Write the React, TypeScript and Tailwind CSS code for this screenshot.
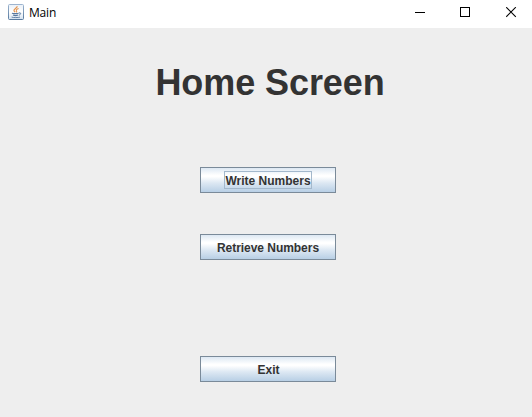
import { ReactNode } from "react";

function JavaIcon() {
  return (
    <svg width="16" height="16" viewBox="0 0 16 16" fill="none" aria-hidden="true">
      <defs>
        <linearGradient id="tile" x1="0" y1="0" x2="0" y2="1">
          <stop offset="0" stopColor="#e9f0f8" />
          <stop offset="0.5" stopColor="#ffffff" />
          <stop offset="1" stopColor="#d3e1ef" />
        </linearGradient>
        <linearGradient id="edge" x1="0" y1="0" x2="0" y2="1">
          <stop offset="0" stopColor="#9db4cf" />
          <stop offset="1" stopColor="#587a9f" />
        </linearGradient>
      </defs>
      <rect x="0.5" y="0.5" width="15" height="15" rx="1" fill="url(#tile)" stroke="url(#edge)" />
      <path d="M9.2 2.2C9.4 4 5.2 5 6 6.7C6.3 7.4 6.9 7.8 7.2 8.2" stroke="#e5954f" strokeWidth="1.3" />
      <path d="M10.6 4.4C9 5 7.9 5.7 8.5 6.7C8.9 7.3 8.8 7.8 8.3 8.3" stroke="#e5954f" strokeWidth="1.1" />
      <path d="M4 9.2C5 9.8 9.2 9.7 10.6 9.2M5 11.1C6.3 11.6 8.7 11.6 10 11.1" stroke="#5778a0" strokeWidth="1.1" />
      <path d="M10.8 9C13.6 8.2 13 10.7 10.8 11.2" stroke="#5778a0" strokeWidth="1" />
      <path d="M3.6 13.1C5 13.7 10.4 13.7 12 13.1" stroke="#5778a0" strokeWidth="0.9" />
    </svg>
  );
}

function TitleBar() {
  return (
    <header className="flex h-7 items-start bg-white pl-2">
      <div className="pt-1">
        <JavaIcon />
      </div>
      <span className="ml-[5px] mt-[5px] font-['Open_Sans','Noto_Sans',sans-serif] text-[12px] leading-4 tracking-[-0.2px] text-black">
        Main
      </span>
      <div className="ml-auto mr-[15px] mt-[7px] flex gap-[35px] text-black">
        <svg width="11" height="11" viewBox="0 0 11 11" shapeRendering="crispEdges">
          <path d="M1 5.5h10" stroke="currentColor" />
        </svg>
        <svg width="11" height="11" viewBox="0 0 11 11" fill="none" shapeRendering="crispEdges">
          <rect x="0.5" y="0.5" width="9" height="9" stroke="currentColor" />
        </svg>
        <svg width="11" height="11" viewBox="0 0 11 11">
          <path d="M0.2 0.2l9.6 9.6M9.8 0.2l-9.6 9.6" stroke="currentColor" strokeWidth="1.1" />
        </svg>
      </div>
    </header>
  );
}

function SwingButton({ children, focused = false }: { children: ReactNode; focused?: boolean }) {
  return (
    <button
      type="button"
      className="flex h-[26px] w-[136px] items-center justify-center border border-[#7a8a99] bg-[linear-gradient(to_bottom,#dde8f3_0%,#ffffff_30%,#ffffff_36%,#dde8f3_62%,#b8cfe5_100%)] text-[12px] font-bold text-[#333333]"
    >
      <span
        className={
          focused
            ? "flex h-[18px] w-[88px] justify-center border border-[#a3b8cc] pt-0.5 leading-[15px]"
            : "block pt-0.5 leading-4 tracking-[-0.04px]"
        }
      >
        {children}
      </span>
    </button>
  );
}

export default function App() {
  return (
    <div className="flex h-[417px] w-[532px] flex-col overflow-hidden bg-[#eeeeee] font-['Liberation_Sans',Arial,sans-serif]">
      <TitleBar />
      <main className="flex flex-col items-center pt-[34px]">
        <h1 className="ml-2 whitespace-nowrap text-[36px] font-bold leading-[42px] tracking-[-0.08px] text-[#333333]">
          Home Screen
        </h1>
        <div className="mt-[63px] flex flex-col pl-1">
          <SwingButton focused>Write Numbers</SwingButton>
          <div className="mt-[41px]">
            <SwingButton>Retrieve Numbers</SwingButton>
          </div>
          <div className="mt-24">
            <SwingButton>
              <span className="pl-px">Exit</span>
            </SwingButton>
          </div>
        </div>
      </main>
    </div>
  );
}
